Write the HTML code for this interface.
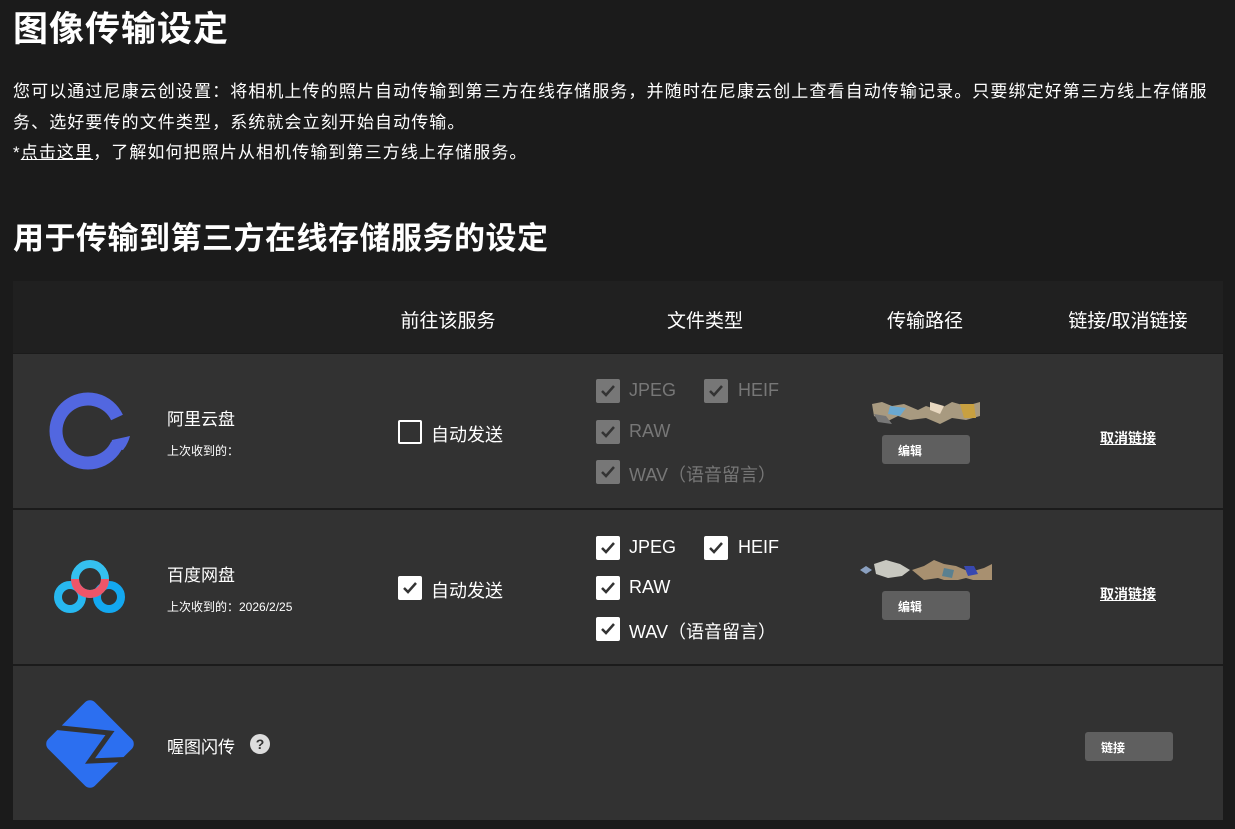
<!DOCTYPE html>
<html><head><meta charset="utf-8"><style>
*{margin:0;padding:0;box-sizing:border-box}
body{width:1235px;height:829px;background:#1b1b1b;color:#fff;font-family:"Liberation Sans","Noto Sans CJK SC",sans-serif;position:relative;overflow:hidden}
.a{position:absolute;white-space:nowrap}
h1{position:absolute;left:13px;top:1px;font-size:35px;font-weight:bold;letter-spacing:1px}
.p{position:absolute;left:13px;font-size:17px;letter-spacing:1.1px;white-space:nowrap}
h2{position:absolute;left:13px;top:213px;font-size:31px;font-weight:bold;letter-spacing:0.5px}
.tb{position:absolute;left:13px;width:1210px}
.hd{top:281px;height:72px;background:#202020}
.row{background:#323232;height:154px}
.th{font-size:19px;top:306px;transform:translateX(-50%)}
.cb{position:absolute;width:24px;height:24px;border-radius:2px;background:#fff}
.cb svg{position:absolute;left:4px;top:5px}
.cb.g{background:#777}
.lab{font-size:18px}
.btn{position:absolute;width:88px;height:29px;background:#5f5f5f;border-radius:3px;font-size:12px;font-weight:bold;padding:7px 0 0 16px}
.lk{font-size:14px;text-decoration:underline;font-weight:bold}
</style></head><body>
<h1>图像传输设定</h1>
<div class="p" style="top:77px">您可以通过尼康云创设置：将相机上传的照片自动传输到第三方在线存储服务，并随时在尼康云创上查看自动传输记录。只要绑定好第三方线上存储服</div>
<div class="p" style="top:108px">务、选好要传的文件类型，系统就会立刻开始自动传输。</div>
<div class="p" style="top:138px">*<u>点击这里</u>，了解如何把照片从相机传输到第三方线上存储服务。</div>
<h2>用于传输到第三方在线存储服务的设定</h2>
<div class="tb hd"></div>
<div class="a th" style="left:448px">前往该服务</div>
<div class="a th" style="left:705px">文件类型</div>
<div class="a th" style="left:925px">传输路径</div>
<div class="a th" style="left:1128px">链接/取消链接</div>
<div class="tb row" style="top:354px"></div>
<div class="tb row" style="top:510px"></div>
<div class="tb row" style="top:666px"></div>

<!-- row1 -->
<svg class="a" style="left:48px;top:392px" width="86" height="80" viewBox="0 0 86 80"><path d="M69 25.5A32 32 0 1 0 69 52.5" fill="none" stroke="#5267e0" stroke-width="13"/><path d="M64 48L82 44Q80 52 75 58L62 56Z" fill="#5267e0"/></svg>
<div class="a" style="left:167px;top:405px;font-size:17px">阿里云盘</div>
<div class="a" style="left:167px;top:442px;font-size:12px">上次收到的：</div>
<div class="cb" style="left:398px;top:420px;background:none;border:2px solid #fff"></div>
<div class="a lab" style="left:431px;top:421px">自动发送</div>
<div class="cb g" style="left:596px;top:379px"><svg width="16" height="14"><path d="M2 7l4 4 8-9" stroke="#333" stroke-width="2.5" fill="none"/></svg></div>
<div class="a lab" style="left:629px;top:380px;color:#777">JPEG</div>
<div class="cb g" style="left:704px;top:379px"><svg width="16" height="14"><path d="M2 7l4 4 8-9" stroke="#333" stroke-width="2.5" fill="none"/></svg></div>
<div class="a lab" style="left:738px;top:380px;color:#777">HEIF</div>
<div class="cb g" style="left:596px;top:420px"><svg width="16" height="14"><path d="M2 7l4 4 8-9" stroke="#333" stroke-width="2.5" fill="none"/></svg></div>
<div class="a lab" style="left:629px;top:421px;color:#777">RAW</div>
<div class="cb g" style="left:596px;top:460px"><svg width="16" height="14"><path d="M2 7l4 4 8-9" stroke="#333" stroke-width="2.5" fill="none"/></svg></div>
<div class="a lab" style="left:629px;top:461px;color:#777">WAV（语音留言）</div>
<svg class="a" style="left:870px;top:400px" width="112" height="24"><path d="M2 4l10-2 10 4 12-2 14 6 8-4 12 4 14-8 14 4 14-4v14l-14 4-14-2-12 6-14-6-16 2-12-4-12 6-12-6z" fill="#a89a80"/><path d="M20 6l16 2-6 8-12-2z" fill="#6aa8d0"/><path d="M60 2l14 4-4 8-10-4z" fill="#e8d8c0"/><path d="M90 4l14 0 2 14-12 0z" fill="#c8a040"/><path d="M4 14l12 2 6 8-14-2z" fill="#777"/></svg>
<div class="btn" style="left:882px;top:435px">编辑</div>
<div class="a lk" style="left:1100px;top:428px">取消链接</div>

<!-- row2 -->
<svg class="a" style="left:54px;top:558px" width="72" height="58" viewBox="0 0 72 58"><g fill="none" stroke-width="8"><circle cx="16" cy="39" r="12" stroke="#27b8f0"/><circle cx="55" cy="39" r="12" stroke="#13a8f0"/><circle cx="36" cy="21" r="15" stroke="#35c0f0"/><path d="M21 21A15 15 0 0 0 51 21" stroke="#ee5569"/></g></svg>
<div class="a" style="left:167px;top:561px;font-size:17px">百度网盘</div>
<div class="a" style="left:167px;top:598px;font-size:12px">上次收到的：2026/2/25</div>
<div class="cb" style="left:398px;top:576px"><svg width="16" height="14"><path d="M2 7l4 4 8-9" stroke="#333" stroke-width="2.5" fill="none"/></svg></div>
<div class="a lab" style="left:431px;top:577px">自动发送</div>
<div class="cb" style="left:596px;top:536px"><svg width="16" height="14"><path d="M2 7l4 4 8-9" stroke="#333" stroke-width="2.5" fill="none"/></svg></div>
<div class="a lab" style="left:629px;top:537px">JPEG</div>
<div class="cb" style="left:704px;top:536px"><svg width="16" height="14"><path d="M2 7l4 4 8-9" stroke="#333" stroke-width="2.5" fill="none"/></svg></div>
<div class="a lab" style="left:738px;top:537px">HEIF</div>
<div class="cb" style="left:596px;top:576px"><svg width="16" height="14"><path d="M2 7l4 4 8-9" stroke="#333" stroke-width="2.5" fill="none"/></svg></div>
<div class="a lab" style="left:629px;top:577px">RAW</div>
<div class="cb" style="left:596px;top:617px"><svg width="16" height="14"><path d="M2 7l4 4 8-9" stroke="#333" stroke-width="2.5" fill="none"/></svg></div>
<div class="a lab" style="left:629px;top:618px">WAV（语音留言）</div>
<svg class="a" style="left:860px;top:556px" width="132" height="24"><path d="M0 14l6-4 6 4-6 4z" fill="#8aa0c0"/><path d="M14 8l12-4 14 4 10 6-8 6-14 2-12-4z" fill="#c8c8c0"/><path d="M52 14l12-4 10-6 10 4 12 2 14 6 14-4 8-4v16l-12 2-14-4-16 4-12-4-14 2z" fill="#a89070"/><path d="M104 10l10 0 4 8-10 2z" fill="#3848b0"/><path d="M84 12l10 2-2 8-10-2z" fill="#5a8090"/></svg>
<div class="btn" style="left:882px;top:591px">编辑</div>
<div class="a lk" style="left:1100px;top:584px">取消链接</div>

<!-- row3 -->
<svg class="a" style="left:40px;top:695px" width="100" height="97"><rect x="17" y="16" width="66" height="66" rx="7" fill="#2c6ff0" transform="rotate(45 50 49)"/><polyline points="2,31 70,38 50,66 98,64" fill="none" stroke="#323232" stroke-width="5" stroke-linejoin="miter"/></svg>
<div class="a" style="left:167px;top:733px;font-size:17px">喔图闪传</div>
<div class="a" style="left:250px;top:734px;width:20px;height:20px;border-radius:50%;background:#ddd;color:#333;font-size:14px;font-weight:bold;text-align:center;line-height:20px">?</div>
<div class="btn" style="left:1085px;top:732px">链接</div>
</body></html>
